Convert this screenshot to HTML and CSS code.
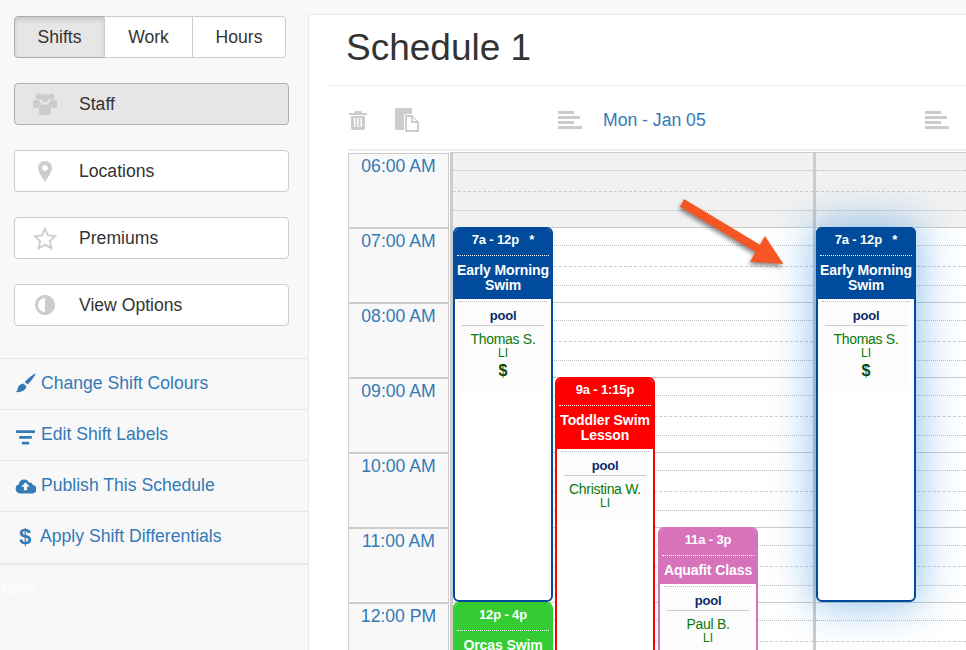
FILE: index.html
```html
<!DOCTYPE html>
<html lang="en">

<head>
  <meta charset="UTF-8">
  <title>Schedule 1</title>
  <link rel="stylesheet" href="styles.css">
</head>

<body>
  <aside class="sidebar">
    <div class="tabs">
      <a class="tab active tab-shifts">Shifts</a>
      <a class="tab tab-work">Work</a>
      <a class="tab tab-hours">Hours</a>
    </div>
    <div class="navs">
      <a class="nav active">
        <svg class="nav-icon" viewBox="0 0 26 24"><circle cx="6.500" cy="4.500" r="3"/><circle cx="19.500" cy="4.500" r="3"/><circle cx="13" cy="6" r="4"/><path d="M1 10q0-2 2-2h4q1 2.500 2.500 3.500q-3 1-3.500 4.500h-3.500q-1.500 0-1.500-2zM25 10q0-2-2-2h-4q-1 2.500-2.500 3.500q3 1 3.500 4.500h3.500q1.500 0 1.500-2z"/><path d="M7 15q0-3 3-3q3 2 6 0q3 0 3 3v6q0 2-2 2h-8q-2 0-2-2z"/></svg>
        Staff
      </a>
      <a class="nav">
        <svg class="nav-icon" viewBox="0 0 26 24"><path fill-rule="evenodd" d="M13 2a7 7 0 0 1 7 7q0 4-7 14q-7-10-7-14a7 7 0 0 1 7-7zM13 6a3 3 0 1 0 .01 0z"/></svg>
        Locations
      </a>
      <a class="nav">
        <svg class="nav-icon" viewBox="0 0 26 24"><path class="star" d="M13 2.500l3 6.800 7.300.8-5.400 5 1.500 7.200-6.400-3.700-6.400 3.700 1.500-7.200-5.400-5 7.300-.8z"/></svg>
        Premiums
      </a>
      <a class="nav">
        <svg class="nav-icon" viewBox="0 0 26 24"><path fill-rule="evenodd" d="M13 2a10 10 0 1 0 .01 0zM13 5v14a7 7 0 0 1 0-14z"/></svg>
        View Options
      </a>
    </div>
    <ul class="links">
      <li>
        <svg class="link-icon" viewBox="0 0 20 20"><path d="M19 .5q.8.5.2 1.500q-3 5-7 9l-3-2.500q4.500-5 9.800-8zM8 10l2.800 2.500q-.2 3-2.800 4.500q-3 1.500-7.500 1.200q2-1 2.200-3.500q.3-3.500 5.300-4.700z"/></svg>
        <a>Change Shift Colours</a>
      </li>
      <li>
        <svg class="link-icon labels-icon" viewBox="0 0 20 20"><path d="M1 3h18v2.600h-18zM4 8.500h12v2.600h-12zM6.500 14h7v2.600h-7z"/></svg>
        <a>Edit Shift Labels</a>
      </li>
      <li>
        <svg class="link-icon" viewBox="0 0 20 20"><path fill-rule="evenodd" d="M5 17.500a4.500 4.500 0 0 1-1.200-8.800a5 5 0 0 1 9.500-1.500a3 3 0 0 1 3.700 2.300a4 4 0 0 1-1 8zM10 7l-4 4.200h2.500v3.300h3v-3.300h2.500z"/></svg>
        <a>Publish This Schedule</a>
      </li>
      <li>
        <span class="dollar">$</span>
        <a>Apply Shift Differentials</a>
      </li>
    </ul>
    <div class="version">123xx</div>
  </aside>

  <main class="main">
    <h1 class="title">Schedule 1</h1>
    <div class="content">
      <div class="toolbar">
        <svg class="tool-icon trash" viewBox="0 0 18 20"><path fill-rule="evenodd" d="M6 1h6l1 2h5v2h-18v-2h5zM2 6h14v12q0 2-2 2h-10q-2 0-2-2zM5 8v9h1.500v-9zM8.200 8v9h1.500v-9zM11.500 8v9h1.500v-9z"/></svg>
        <svg class="tool-icon copy" viewBox="0 0 24 24"><path d="M0 1q0-1 1-1h15q1 0 1 1v5h-6q-2 0-2 2v14h-8q-1 0-1-1z"/><path fill-rule="evenodd" d="M10 8q0-1 1-1h6l7 7v9q0 1-1 1h-12q-1 0-1-1zM12 9v13h10v-7h-6v-6zM18 9.500v3.500h3.500z"/></svg>
        <svg class="tool-icon align align-left" viewBox="0 0 24 18"><path d="M0 0h16v3h-16zM0 5h22v3h-22zM0 10h16v3h-16zM0 15h24v3h-24z"/></svg>
        <span class="day-label">Mon - Jan 05</span>
        <svg class="tool-icon align align-right" viewBox="0 0 24 18"><path d="M0 0h16v3h-16zM0 5h22v3h-22zM0 10h16v3h-16zM0 15h24v3h-24z"/></svg>
      </div>

      <div class="calendar">
        <div class="times">
          <div class="time">06:00 AM</div>
          <div class="time">07:00 AM</div>
          <div class="time">08:00 AM</div>
          <div class="time">09:00 AM</div>
          <div class="time">10:00 AM</div>
          <div class="time">11:00 AM</div>
          <div class="time">12:00 PM</div>
        </div>

        <div class="day day-one">
          <div class="hour closed"></div>
          <div class="hour"></div>
          <div class="hour"></div>
          <div class="hour"></div>
          <div class="hour"></div>
          <div class="hour"></div>
          <div class="hour"></div>

          <div class="shift shift-blue shift-early">
            <div class="shift-head">
              <div class="shift-time">7a - 12p &nbsp;&nbsp;*</div>
              <div class="shift-name">Early Morning Swim</div>
            </div>
            <div class="shift-body">
              <div class="shift-place">pool</div>
              <div class="shift-staff">Thomas S.</div>
              <div class="shift-code">LI</div>
              <div class="shift-money">$</div>
            </div>
          </div>

          <div class="shift shift-red shift-toddler">
            <div class="shift-head">
              <div class="shift-time">9a - 1:15p</div>
              <div class="shift-name">Toddler Swim Lesson</div>
            </div>
            <div class="shift-body">
              <div class="shift-place">pool</div>
              <div class="shift-staff">Christina W.</div>
              <div class="shift-code">LI</div>
            </div>
          </div>

          <div class="shift shift-pink shift-aquafit">
            <div class="shift-head">
              <div class="shift-time">11a - 3p</div>
              <div class="shift-name">Aquafit Class</div>
            </div>
            <div class="shift-body">
              <div class="shift-place">pool</div>
              <div class="shift-staff">Paul B.</div>
              <div class="shift-code">LI</div>
            </div>
          </div>

          <div class="shift shift-green shift-orcas">
            <div class="shift-head">
              <div class="shift-time">12p - 4p</div>
              <div class="shift-name">Orcas Swim</div>
            </div>
          </div>
        </div>

        <div class="day day-two">
          <div class="hour closed"></div>
          <div class="hour"></div>
          <div class="hour"></div>
          <div class="hour"></div>
          <div class="hour"></div>
          <div class="hour"></div>
          <div class="hour"></div>

          <div class="shift shift-blue shift-early shift-glow">
            <div class="shift-head">
              <div class="shift-time">7a - 12p &nbsp;&nbsp;*</div>
              <div class="shift-name">Early Morning Swim</div>
            </div>
            <div class="shift-body">
              <div class="shift-place">pool</div>
              <div class="shift-staff">Thomas S.</div>
              <div class="shift-code">LI</div>
              <div class="shift-money">$</div>
            </div>
          </div>
        </div>

        <svg class="arrow" viewBox="0 0 120 80"><path d="M14 9 90 54.700 95 46 113.300 74 80 71.700 85.700 62 10 16.700z"/></svg>
      </div>
    </div>
  </main>
</body>

</html>
```

FILE: styles.css
```css
* {
  box-sizing: border-box;
}

html,
body {
  height: 650px;
  margin: 0;
  overflow: hidden;
}

body {
  display: flex;
  font-family: "Liberation Sans", Arial, sans-serif;
  font-size: 17.600px;
  color: #333;
  background: #f8f8f8;
}

/* sidebar */

.sidebar {
  flex: none;
  width: 308px;
  padding-top: 16px;
}

.tabs {
  display: flex;
  width: 272px;
  height: 42px;
  margin-left: 14px;
}

.tab {
  display: flex;
  align-items: center;
  justify-content: center;
  background: #fff;
  border: 1px solid #ccc;
  margin-left: -1px;
}

.tab-shifts {
  width: 91px;
  margin-left: 0;
  border-radius: 4px 0 0 4px;
}

.tab-work {
  width: 89px;
}

.tab-hours {
  width: 94px;
  border-radius: 0 4px 4px 0;
}

.tab.active {
  background: #e6e6e6;
  border-color: #adadad;
  box-shadow: inset 0 3px 5px rgba(0, 0, 0, .125);
}

.navs {
  display: flex;
  flex-direction: column;
  gap: 25px;
  width: 275px;
  margin: 25px 0 0 14px;
}

.nav {
  display: flex;
  align-items: center;
  height: 42px;
  padding-left: 17px;
  background: #fff;
  border: 1px solid #ccc;
  border-radius: 4px;
}

.nav.active {
  background: #e6e6e6;
  border-color: #adadad;
}

.nav-icon {
  flex: none;
  width: 26px;
  height: 24px;
  margin-right: 21px;
  fill: #ccc;
}

.nav-icon .star {
  fill: none;
  stroke: #ccc;
  stroke-width: 1.800;
}

.links {
  list-style: none;
  margin: 32px 0 0;
  padding: 0;
  border-top: 1px solid #e7e7e7;
}

.links li {
  display: flex;
  align-items: center;
  height: 51px;
  padding: 0 0 2px 15px;
  border-bottom: 1px solid #e7e7e7;
  color: #337ab7;
}

.links li:last-child {
  height: 53px;
  border-bottom-width: 2px;
}

.link-icon {
  flex: none;
  width: 21px;
  height: 21px;
  margin-right: 5px;
  fill: #337ab7;
}

.labels-icon {
  margin-top: 6px;
}

.dollar {
  flex: none;
  width: 25px;
  padding-left: 4px;
  font-size: 22px;
  font-weight: bold;
}

.version {
  margin-top: 16px;
  font-size: 13.500px;
  color: #fff;
}

/* schedule */

.main {
  flex: 1;
  min-width: 0;
  height: 636px;
  margin-top: 14px;
  padding-left: 18px;
  background: #fff;
  border-top: 1px solid #e7e7e7;
  border-left: 1px solid #e7e7e7;
}

.title {
  height: 71px;
  margin: 0;
  padding: 12px 0 0 19px;
  font-size: 37px;
  font-weight: normal;
  line-height: 41px;
  border-bottom: 1px solid #eee;
}

.content {
  padding-left: 21px;
}

.toolbar {
  display: flex;
  align-items: center;
  height: 65px;
  margin-bottom: 1px;
  padding-top: 5px;
  border-bottom: 2px solid #eee;
}

.tool-icon {
  flex: none;
  fill: #ccc;
}

.trash {
  width: 18px;
  height: 20px;
  margin-left: 1px;
}

.copy {
  width: 24px;
  height: 24px;
  margin-left: 28px;
}

.align {
  width: 24px;
  height: 18px;
}

.align-left {
  margin-left: 139px;
}

.day-label {
  margin-left: 21px;
  color: #337ab7;
}

.align-right {
  margin-left: 219px;
}

.calendar {
  display: flex;
  height: 498px;
  overflow: hidden;
  position: relative;
}

.times {
  flex: none;
  width: 101px;
  margin-right: 1px;
  padding-top: 1px;
}

.time {
  height: 75px;
  padding-top: 2px;
  text-align: center;
  line-height: 20px;
  color: #337ab7;
  background: #f8f8f8;
  border: 1px solid #ccc;
}

.day {
  flex: none;
  position: relative;
  border-top: 1px solid #ccc;
  border-left: 3px solid #ccc;
}

.day-one {
  width: 363px;
}

.day-two {
  width: 153px;
}

.hour {
  display: flex;
  flex-direction: column;
  height: 75px;
  border-bottom: 1px solid #ccc;
}

.hour::before {
  content: "";
  height: 20px;
  margin-top: 17px;
  border-top: 1px dotted #bbb;
  border-bottom: 1px dashed #ccc;
}

.hour::after {
  content: "";
  margin-top: 18px;
  border-top: 1px dotted #bbb;
}

.hour.closed {
  background: #f1f1f1;
}

/* shifts */

.shift {
  position: absolute;
  width: 100px;
  background: #fff;
  border: 2px solid;
  border-radius: 6px;
  overflow: hidden;
}

.shift-glow {
  overflow: visible;
  box-shadow: 0 0 40px 4px rgba(30, 130, 220, .48);
}

.shift-blue {
  border-color: #004b9b;
}

.shift-red {
  border-color: #f00;
}

.shift-pink {
  border-color: #d673bb;
}

.shift-green {
  border-color: #33cc33;
}

.shift-early {
  top: 74px;
  left: 0;
  height: 375px;
}

.shift-toddler {
  top: 224px;
  left: 102px;
  height: 320px;
}

.shift-aquafit {
  top: 374px;
  left: 205px;
  height: 300px;
}

.shift-orcas {
  top: 449px;
  left: 0;
  height: 300px;
}

.shift-head {
  margin: -2px -2px 0;
  padding: 0 3px 6px;
  color: #fff;
  font-weight: bold;
  text-align: center;
}

.shift-glow .shift-head {
  border-radius: 6px 6px 0 0;
}

.shift-blue .shift-head {
  background: #004b9b;
}

.shift-red .shift-head {
  background: #f00;
}

.shift-pink .shift-head {
  background: #d673bb;
}

.shift-green .shift-head {
  background: #33cc33;
}

.shift-time {
  height: 29px;
  margin: 0 1px;
  padding-top: 6px;
  font-size: 13px;
  line-height: 14px;
  letter-spacing: -.150px;
  white-space: nowrap;
  border-bottom: 1px dotted #fff;
}

.shift-name {
  padding-top: 7px;
  font-size: 14px;
  line-height: 15px;
  letter-spacing: -.100px;
}

.shift-body {
  margin: 2px 4px 0;
  padding: 0 3px 10px;
  text-align: center;
  background: #fcfcfc;
  border-top: 1px dotted #bbb;
}

.shift-place {
  height: 24px;
  padding-top: 6px;
  font-size: 13px;
  font-weight: bold;
  line-height: 15px;
  letter-spacing: -.200px;
  color: #0a2a6b;
  border-bottom: 1px solid #ccc;
}

.shift-staff {
  margin-top: 6px;
  font-size: 14px;
  line-height: 15px;
  letter-spacing: -.300px;
  color: #0a7a0a;
}

.shift-code {
  font-size: 12px;
  line-height: 13px;
  color: #0a7a0a;
}

.shift-money {
  margin-top: 1px;
  font-size: 16px;
  font-weight: bold;
  line-height: 20px;
  color: #0a4a0a;
}

/* annotation over the calendar */

.arrow {
  position: absolute;
  left: 322px;
  top: 38px;
  width: 120px;
  height: 80px;
  fill: #f55623;
  filter: drop-shadow(-1px 3px 2px rgba(0, 0, 0, .45));
}
```
